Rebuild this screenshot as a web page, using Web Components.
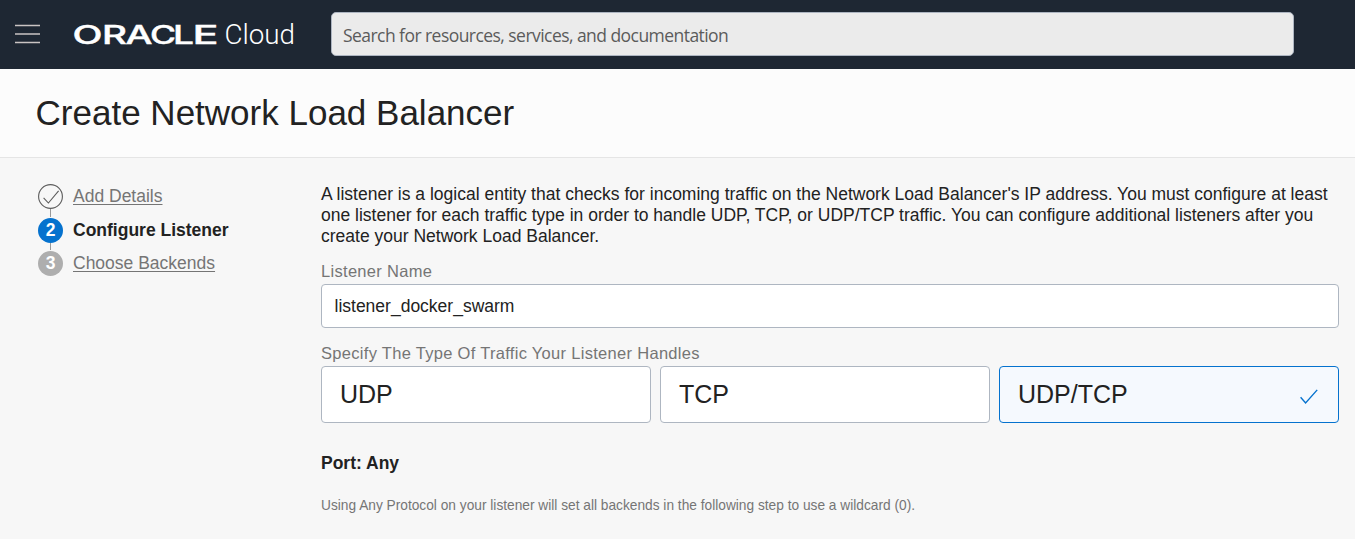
<!DOCTYPE html>
<html lang="en">
<head>
<meta charset="utf-8">
<title>Create Network Load Balancer</title>
<style>
html,body{margin:0;height:100%;overflow:hidden}
body{background:#f7f7f7;color:#222;font:17.5px/21px "Liberation Sans",Arial,sans-serif}
</style>
</head>
<body>
<nlb-app></nlb-app>
<script>
function define(name, html) {
  const t = document.createElement('template');
  t.innerHTML = html;
  customElements.define(name, class extends HTMLElement {
    constructor() {
      super();
      this.attachShadow({mode: 'open'}).append(t.content.cloneNode(true));
    }
  });
}

define('cloud-logo', `
<style>:host{display:block;width:230px;height:34px}svg{display:block}</style>
<svg width="230" height="34" viewBox="0 0 230 34" fill="#fff">
  <text y="26" font-family="Inter, sans-serif" font-weight="500" font-size="25" stroke="#fff" stroke-width=".4"><tspan x="-.5" textLength="30" lengthAdjust="spacingAndGlyphs">O</tspan><tspan x="29" textLength="25" lengthAdjust="spacingAndGlyphs">R</tspan><tspan x="52.5" textLength="27" lengthAdjust="spacingAndGlyphs">A</tspan><tspan x="77" textLength="26" lengthAdjust="spacingAndGlyphs">C</tspan><tspan x="100" textLength="21" lengthAdjust="spacingAndGlyphs">L</tspan><tspan x="119.5" textLength="26" lengthAdjust="spacingAndGlyphs">E</tspan></text>
  <text x="151.5" y="26" font-family="Roboto, sans-serif" font-weight="300" font-size="27" textLength="70.5" lengthAdjust="spacingAndGlyphs">Cloud</text>
</svg>`);

define('search-box', `
<style>
:host{display:flex;align-items:center;box-sizing:border-box;width:963px;height:44px;padding:2px 11px 0;border:1px solid #adb5c1;border-radius:5px;background:#ebebeb;color:#5b5b5b;font:17.5px/24px "Open Sans","Noto Sans",sans-serif;letter-spacing:-.55px;white-space:nowrap}
</style><slot></slot>`);

define('top-bar', `
<style>
:host{display:flex;height:69px;background:#1e2733;box-sizing:border-box;padding:12px 0 0 15px}
.menu{flex:none;width:26px;height:20px;margin:12px 32px 0 0}
cloud-logo{flex:none;margin:6px 28px 0 0}
search-box{flex:none}
</style>
<svg class="menu" viewBox="0 0 26 20" stroke="#c9c4c3" stroke-width="1.5"><path d="M0 1.6h25M0 10h25M0 18.4h25"/></svg>
<cloud-logo></cloud-logo>
<search-box>Search for resources, services, and documentation</search-box>`);

define('page-title', `
<style>
:host{display:block;height:88px;background:#fcfcfc;border-bottom:1px solid #e5e5e5}
h1{margin:0;padding:24px 0 0 35.6px;font-size:35px;line-height:40px;font-weight:400;white-space:nowrap}
</style><h1><slot></slot></h1>`);

define('wizard-step', `
<style>
:host{display:flex;align-items:center;gap:10px;height:26px;color:#757575;white-space:nowrap}
.mark{flex:none;box-sizing:border-box;width:25px;height:25px;border-radius:50%;background:#aeaeae;color:#fff;font-weight:700;font-size:17.5px;line-height:25px;text-align:center}
.text{text-decoration:underline;text-underline-offset:2px;text-decoration-thickness:1px}
:host([state=current]){color:#222;font-weight:700}
:host([state=current]) .mark{background:#0572ce}
:host([state=current]) .text{text-decoration:none}
svg{display:none}
:host([state=done]) .mark{background:none}
:host([state=done]) svg{display:block}
</style>
<span class="mark"><svg width="25" height="25" viewBox="0 0 25 25" fill="none" stroke="#5c5c5c" stroke-width="1.1"><circle cx="12.5" cy="12.5" r="11.9"/><path d="M5.6 13.8l4.8 5.2L20.6 6.8"/></svg><slot name="n"></slot></span>
<span class="text"><slot></slot></span>`);

define('wizard-steps', `
<style>
:host{display:flex;flex-direction:column;margin-top:-1px}
i{width:1px;height:8px;margin-left:12px;background:#999}
i+wizard-step+i{height:7px}
</style>
<wizard-step state="done">Add Details</wizard-step><i></i>
<wizard-step state="current"><span slot="n">2</span>Configure Listener</wizard-step><i></i>
<wizard-step><span slot="n">3</span>Choose Backends</wizard-step>`);

define('form-label', `
<style>:host{display:block;color:#757575;font-size:16.5px;line-height:20px;letter-spacing:.3px;white-space:nowrap}</style><slot></slot>`);

define('text-field', `
<style>:host{display:flex;align-items:center;box-sizing:border-box;height:44px;padding:0 12.5px;border:1px solid #aeb6c1;border-radius:4px;background:#fff}</style><slot></slot>`);

define('choice-card', `
<style>
:host{display:flex;align-items:center;justify-content:space-between;box-sizing:border-box;height:57px;padding:0 20px 2px 18px;border:1px solid #aeb6c1;border-radius:4px;background:#fff;font-size:25px;line-height:30px}
:host([selected]){border-color:#0572ce;background:#f5f9fe}
svg{display:none;margin-top:6px}
:host([selected]) svg{display:block}
</style>
<span><slot></slot></span>
<svg width="18" height="16" viewBox="0 0 18 16" fill="none" stroke="#0572ce" stroke-width="1.4"><path d="M.6 8.2l5 5.8L17.2.9"/></svg>`);

define('listener-form', `
<style>
:host{display:block}
p{margin:0;white-space:nowrap}
form-label.name{margin-top:14px}
text-field{margin-top:3px}
form-label.type{margin-top:15px}
.cards{display:grid;grid-template-columns:330px 330px 340px;gap:9px;margin-top:3px}
.port{margin-top:30px;font-weight:700}
.hint{margin-top:22px;color:#757575;font-size:13.73px;line-height:20px}
</style>
<p>A listener is a logical entity that checks for incoming traffic on the Network Load Balancer's IP address. You must configure at least<br>one listener for each traffic type in order to handle UDP, TCP, or UDP/TCP traffic. You can configure additional listeners after you<br>create your Network Load Balancer.</p>
<form-label class="name">Listener Name</form-label>
<text-field>listener_docker_swarm</text-field>
<form-label class="type">Specify The Type Of Traffic Your Listener Handles</form-label>
<div class="cards">
  <choice-card>UDP</choice-card>
  <choice-card>TCP</choice-card>
  <choice-card selected>UDP/TCP</choice-card>
</div>
<p class="port">Port: Any</p>
<p class="hint">Using Any Protocol on your listener will set all backends in the following step to use a wildcard (0).</p>`);

define('nlb-app', `
<style>
:host{display:block}
main{display:grid;grid-template-columns:283px 1018px;padding:26px 0 0 38px}
</style>
<top-bar></top-bar>
<page-title>Create Network Load Balancer</page-title>
<main><wizard-steps></wizard-steps><listener-form></listener-form></main>`);
</script>
</body>
</html>
